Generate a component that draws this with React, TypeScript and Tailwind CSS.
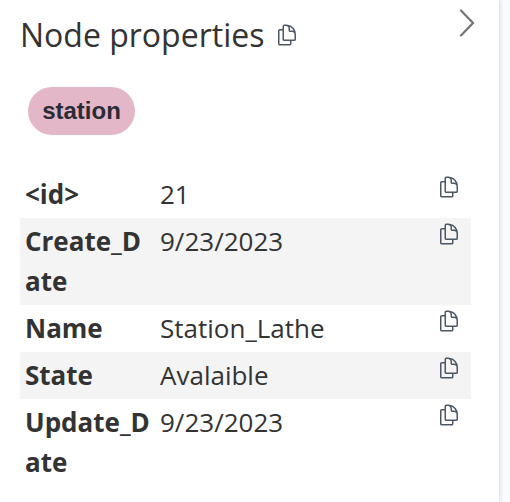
const rows = [
  { name: "<id>", value: "21" },
  { name: "Create_Date", value: "9/23/2023" },
  { name: "Name", value: "Station_Lathe" },
  { name: "State", value: "Avalaible" },
  { name: "Update_Date", value: "9/23/2023" },
];

function CopyIcon() {
  return (
    <svg
      className="block size-6 shrink-0"
      viewBox="0 0 24 24"
      fill="none"
      stroke="#4b5766"
      strokeWidth="1.5"
      strokeLinecap="round"
      strokeLinejoin="round"
    >
      <path d="M15.75 17.25v3.375c0 .621-.504 1.125-1.125 1.125h-9.75a1.125 1.125 0 0 1-1.125-1.125V7.875c0-.621.504-1.125 1.125-1.125H6.75a9.06 9.06 0 0 1 1.5.124m7.5 10.376h3.375c.621 0 1.125-.504 1.125-1.125V11.25c0-4.46-3.243-8.161-7.5-8.876a9.06 9.06 0 0 0-1.5-.124H9.375c-.621 0-1.125.504-1.125 1.125v3.5m7.5 10.375H9.375a1.125 1.125 0 0 1-1.125-1.125v-9.25m12 6.625v-1.875a3.375 3.375 0 0 0-3.375-3.375h-1.5a1.125 1.125 0 0 1-1.125-1.125v-1.5a3.375 3.375 0 0 0-3.375-3.375H9.75" />
    </svg>
  );
}

export default function App() {
  return (
    <div className="h-[502px] w-[510px] overflow-hidden bg-[#f9fbff] font-['Open_Sans',sans-serif] text-[#333333]">
      <aside className="h-full w-[499px] bg-white pl-5 shadow-[0_0_5px_rgba(50,60,80,0.25)]">
        <header className="flex h-[87px] items-start">
          <h1 className="w-[255px] pt-[11px] text-[32px] leading-[48px] font-normal whitespace-nowrap">
            Node properties
          </h1>
          <button className="mt-[23px]" aria-label="Copy all">
            <CopyIcon />
          </button>
          <button className="mt-[9px] ml-[160px]" aria-label="Collapse">
            <svg width="16" height="28" viewBox="0 0 16 28" fill="none" stroke="#737373" strokeWidth="2.2" strokeLinecap="round">
              <path d="M2 1.5 14 14 2 26.5" />
            </svg>
          </button>
        </header>
        <span className="ml-2 flex h-12 w-[107px] items-center justify-center rounded-full bg-[#e3b6c8] font-['Liberation_Sans',sans-serif] text-2xl font-bold text-[#2a2c34]">
          station
        </span>
        <dl className="mt-9 w-[451px] text-[26px] leading-10">
          {rows.map((row) => (
            <div key={row.name} className="flex items-start pt-[3px] pb-1 pl-[5px] even:bg-[#f4f4f4]">
              <dt className="w-[127px] shrink-0 font-bold break-all">{row.name}</dt>
              <dd className="ml-2 w-[277px] shrink-0">{row.value}</dd>
              <button className="mt-px" aria-label="Copy value">
                <CopyIcon />
              </button>
            </div>
          ))}
        </dl>
      </aside>
    </div>
  );
}
